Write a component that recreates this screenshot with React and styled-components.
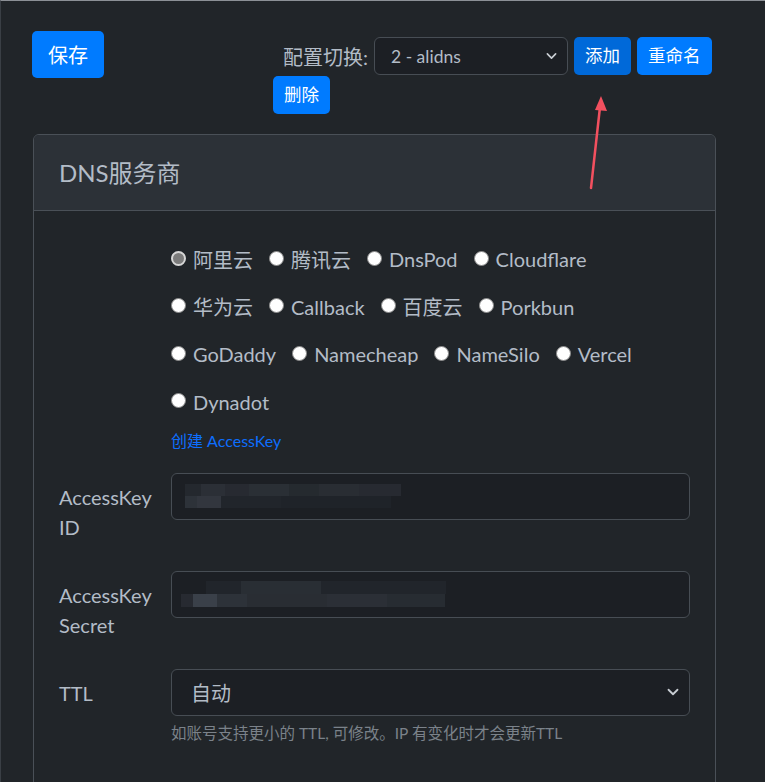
import React from "react";
import styled, { createGlobalStyle } from "styled-components";

// Styles

const GlobalStyle = createGlobalStyle`
	html, body {
		margin: 0;
		padding: 0;
		background: #212529;
	}
	body {
		font-family: "Lato", "Noto Sans CJK SC", sans-serif;
		color: #b3bcc7;
		overflow: hidden;
	}
`;

const Page = styled.div`
	position: relative;
	min-height: 782px;
	border-top: 1px solid #8c9096;
	border-left: 1px solid #3a3f45;
	box-sizing: border-box;
`;

const Toolbar = styled.div`
	display: flex;
	align-items: flex-start;
	padding: 30px 50px 0 31px;
`;

const Button = styled.button`
	border: 0;
	border-radius: 5px;
	color: #fff;
	background-color: ${p => (p.$active ? "#0069d9" : "#007bff")};
	font-family: inherit;
	font-size: ${p => (p.$large ? "20px" : "17.5px")};
	line-height: 1.5;
	padding: ${p => (p.$large ? "8px 16px" : "4px 11px")};
	height: ${p => (p.$large ? "47px" : "38px")};
	white-space: nowrap;
	cursor: pointer;
`;

const SwitchGroup = styled.div`
	margin-left: auto;
	width: 442px;
	display: flex;
	flex-wrap: wrap;
	align-items: center;
	column-gap: 6px;
	row-gap: 1px;
	padding-top: 6px;
`;

const SwitchLabel = styled.span`
	margin-left: 10px;
	font-size: 20px;
	color: #b3bcc7;
`;

const SelectBox = styled.div`
	position: relative;
	display: flex;
	align-items: center;
	box-sizing: border-box;
	width: ${p => p.$width || "100%"};
	height: ${p => p.$height || "47px"};
	padding-left: ${p => p.$pad || "19px"};
	border: 1px solid #474d54;
	border-radius: 6px;
	background: #1c1f24;
	font-size: ${p => p.$size || "20px"};
	color: #b3bcc7;
`;

const Chevron = styled.svg`
	position: absolute;
	right: 10px;
	top: 50%;
	transform: translateY(-50%);
`;

const Card = styled.div`
	margin: 20px 49px 0 32px;
	border: 1px solid #4a5057;
	border-radius: 6px;
	background: #212529;
	overflow: hidden;
`;

const CardHeader = styled.div`
	height: 76px;
	display: flex;
	align-items: center;
	padding: 0 25px 3px;
	box-sizing: border-box;
	background: #2c3137;
	border-bottom: 1px solid #4a5057;
	font-size: 24px;
	color: #b3bcc7;
`;

const CardBody = styled.div`
	padding: 33px 25px 80px;
`;

const FormRow = styled.div`
	display: grid;
	grid-template-columns: 112px 1fr;
	margin-bottom: ${p => p.$mb || "20px"};
`;

const FieldLabel = styled.label`
	padding: 9px 12px 9px 0;
	font-size: 20px;
	line-height: 30px;
	color: #b3bcc7;
`;

const RadioRows = styled.div`
	display: flex;
	flex-direction: column;
	row-gap: 17.5px;
`;

const RadioRow = styled.div`
	display: flex;
	align-items: center;
	column-gap: 16px;
	height: 30px;
`;

const RadioItem = styled.label`
	display: flex;
	align-items: center;
	column-gap: 7px;
	font-size: 20px;
	color: #b3bcc7;
	white-space: nowrap;
`;

const RadioDot = styled.span`
	width: 15px;
	height: 15px;
	box-sizing: border-box;
	border-radius: 50%;
	background: ${p => (p.$checked ? "#7b7b7b" : "#fff")};
	border: ${p => (p.$checked ? "2px solid #d6d6d6" : "1px solid #8a8a8a")};
	margin-top: -2px;
`;

const CreateLink = styled.a`
	display: inline-block;
	margin-top: 12px;
	font-size: 16px;
	line-height: 24px;
	color: #0d6efd;
	text-decoration: none;
`;

const TextInput = styled.div`
	box-sizing: border-box;
	height: 47px;
	border: 1px solid #474d54;
	border-radius: 6px;
	background: #1c1f24;
	display: flex;
	align-items: center;
	padding-left: ${p => p.$pad || "13px"};
`;

const HelpText = styled.div`
	margin-top: 5px;
	font-size: 15.5px;
	line-height: 24px;
	color: #7b828a;
`;

const Arrow = styled.svg`
	position: absolute;
	left: 584px;
	top: 92px;
	pointer-events: none;
`;

// Data

const providers = [
	[{ name: "阿里云", checked: true }, { name: "腾讯云" }, { name: "DnsPod" }, { name: "Cloudflare" }],
	[{ name: "华为云" }, { name: "Callback" }, { name: "百度云" }, { name: "Porkbun" }],
	[{ name: "GoDaddy" }, { name: "Namecheap" }, { name: "NameSilo" }, { name: "Vercel" }],
	[{ name: "Dynadot" }]
];

// blurred values: [x, y, w, h, opacity]
const idBlur = [
	[0, 0, 16, 12, 0.08], [16, 0, 24, 12, 0.14], [40, 0, 24, 12, 0.1], [64, 0, 40, 12, 0.13],
	[104, 0, 30, 12, 0.09], [134, 0, 40, 12, 0.12], [174, 0, 42, 12, 0.1],
	[0, 12, 12, 12, 0.16], [12, 12, 24, 12, 0.2], [36, 12, 60, 12, 0.05], [96, 12, 110, 12, 0.04]
];

const secretBlur = [
	[25, 0, 240, 13, 0.05], [60, 0, 80, 13, 0.08],
	[0, 13, 12, 13, 0.1], [12, 13, 24, 13, 0.28], [36, 13, 30, 13, 0.16], [66, 13, 80, 13, 0.12],
	[146, 13, 60, 13, 0.14], [206, 13, 58, 13, 0.11]
];

const ChevronIcon = ({ size = 12 }) => (
	<Chevron width={size} height={size} viewBox="0 0 16 16" fill="none">
		<path d="M2 5l6 6 6-6" stroke="#c7ccd2" strokeWidth="2.4" strokeLinecap="round" strokeLinejoin="round" />
	</Chevron>
);

const Blur = ({ blocks, width, height }) => (
	<svg width={width} height={height}>
		{blocks.map(([x, y, w, h, o], i) => (
			<rect key={i} x={x} y={y} width={w} height={h} fill="#8a97a8" opacity={o} />
		))}
	</svg>
);

const App = () => (
	<Page>
		<GlobalStyle />
		<Toolbar>
			<Button $large>保存</Button>
			<SwitchGroup>
				<SwitchLabel>配置切换:</SwitchLabel>
				<SelectBox $width="194px" $height="38px" $pad="16px" $size="17.5px">
					2 - alidns
					<ChevronIcon size={11} />
				</SelectBox>
				<Button $active>添加</Button>
				<Button>重命名</Button>
				<Button>删除</Button>
			</SwitchGroup>
		</Toolbar>

		<Card>
			<CardHeader>DNS服务商</CardHeader>
			<CardBody>
				<FormRow $mb="0">
					<span />
					<div>
						<RadioRows>
							{providers.map((row, i) => (
								<RadioRow key={i}>
									{row.map(p => (
										<RadioItem key={p.name}>
											<RadioDot $checked={p.checked} />
											{p.name}
										</RadioItem>
									))}
								</RadioRow>
							))}
						</RadioRows>
						<CreateLink href="#">创建 AccessKey</CreateLink>
					</div>
				</FormRow>

				<FormRow style={{ marginTop: 20 }}>
					<FieldLabel>AccessKey ID</FieldLabel>
					<TextInput>
						<Blur blocks={idBlur} width={216} height={24} />
					</TextInput>
				</FormRow>

				<FormRow>
					<FieldLabel>AccessKey Secret</FieldLabel>
					<TextInput $pad="9px">
						<Blur blocks={secretBlur} width={265} height={26} />
					</TextInput>
				</FormRow>

				<FormRow>
					<FieldLabel>TTL</FieldLabel>
					<div>
						<SelectBox>
							自动
							<ChevronIcon />
						</SelectBox>
						<HelpText>如账号支持更小的 TTL, 可修改。IP 有变化时才会更新TTL</HelpText>
					</div>
				</FormRow>
			</CardBody>
		</Card>

		<Arrow width="30" height="100" viewBox="0 0 30 100">
			<path d="M6 95 L15 14" stroke="#f2505f" strokeWidth="2.5" strokeLinecap="round" />
			<path d="M16 3 L22 18 L10 17 Z" fill="#f2505f" />
		</Arrow>
	</Page>
);

export default App;
